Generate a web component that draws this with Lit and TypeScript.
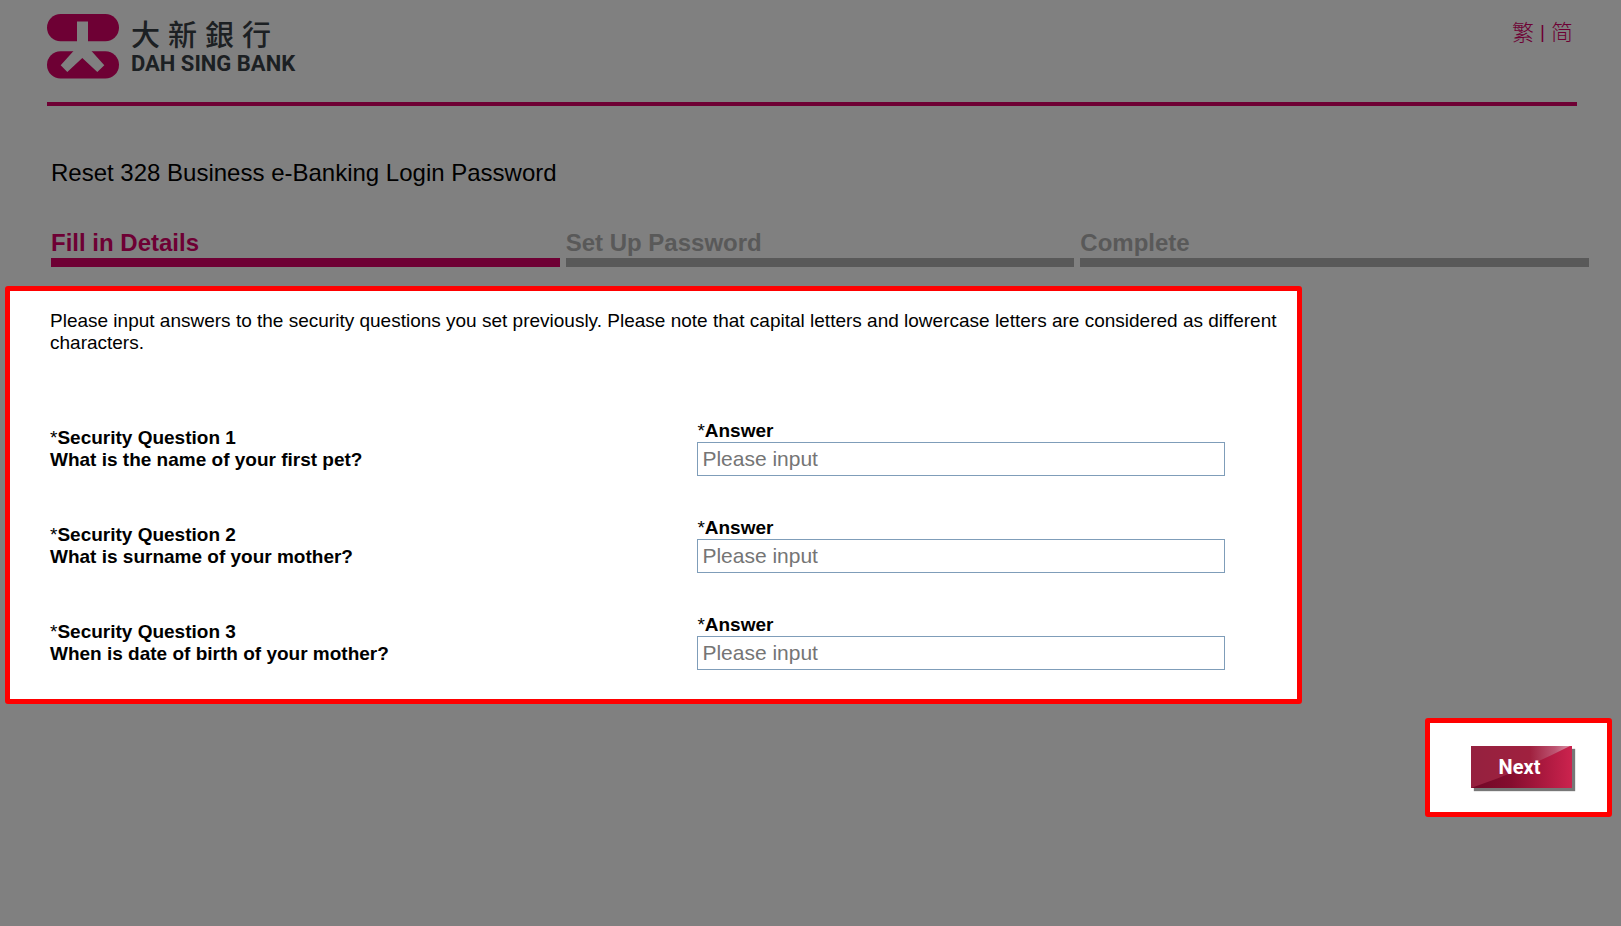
import { LitElement, html, css } from "lit";
import { customElement, state } from "lit/decorators.js";

interface SecurityQuestion {
  id: number;
  text: string;
}

@customElement("app-root")
export class AppRoot extends LitElement {
  @state() private steps = ["Fill in Details", "Set Up Password", "Complete"];
  @state() private currentStep = 0;
  @state() private questions: SecurityQuestion[] = [
    { id: 1, text: "What is the name of your first pet?" },
    { id: 2, text: "What is surname of your mother?" },
    { id: 3, text: "When is date of birth of your mother?" },
  ];

  static styles = css`
    :host {
      --brand: #6e0034;
      --muted: #595959;
      --highlight: #ff0000;
      display: block;
      box-sizing: border-box;
      min-height: 100vh;
      background: #808080;
      color: #000;
      font: 19px/22px "Liberation Sans", Arial, sans-serif;
    }
    * { box-sizing: border-box; }
    .header {
      display: flex;
      justify-content: space-between;
      align-items: flex-start;
      margin: 0 44px 0 47px;
      padding: 14px 4px 23px 0;
      border-bottom: 4px solid var(--brand);
    }
    .brand { display: flex; gap: 12px; color: #1c2023; }
    .mark { display: block; width: 72px; height: 65px; }
    .names { display: flex; flex-direction: column; padding-top: 3px; }
    .zh {
      display: flex;
      gap: 8px;
      font: 500 29px/32px "Noto Sans CJK TC", sans-serif;
    }
    .en { font: 700 22px/30px Roboto, sans-serif; }
    .langs {
      display: flex;
      gap: 6px;
      padding-top: 2px;
      color: var(--brand);
      font: 300 22px/28px "Noto Sans CJK TC", sans-serif;
    }
    .langs a { color: inherit; text-decoration: none; }
    .bar { font: 19px/32px "Liberation Sans", Arial, sans-serif; }
    .title { margin: 52px 51px 0; font-weight: 400; font-size: 24px; line-height: 30px; }
    .steps {
      display: grid;
      grid-template-columns: repeat(3, 1fr);
      gap: 6px;
      margin: 40px 32px 0 51px;
      padding: 0;
      list-style: none;
      font-weight: 700;
      font-size: 24px;
      line-height: 30px;
    }
    .step { color: var(--muted); border-bottom: 9px solid var(--muted); }
    .step.active { color: var(--brand); border-color: var(--brand); }
    .panel, .action {
      border: 5px solid var(--highlight);
      border-radius: 3px;
      background: #fff;
    }
    .panel { width: 80%; margin: 19px 0 0 5px; padding: 19px 0 29px 40px; }
    .note { margin: 0 20px 66px 0; }
    .rows { display: grid; gap: 41px; }
    .row { display: grid; grid-template-columns: 27fr 25fr; }
    .question { padding-top: 7px; font-weight: 700; }
    .question p { margin: 0; }
    .req { font-weight: 400; }
    .answer { display: flex; flex-direction: column; font-weight: 700; }
    .input {
      width: 88%;
      height: 34px;
      padding: 0 4px;
      border: 1px solid #7f9db9;
      background: #fff;
      font: 21px/26px "Liberation Sans", Arial, sans-serif;
    }
    .input::placeholder { color: #757575; opacity: 1; }
    .action { width: fit-content; margin: 14px 9px 0 auto; padding: 23px 35px 24px 41px; }
    .next {
      position: relative;
      display: block;
      width: 101px;
      height: 42px;
      padding: 0 4px 0 0;
      border: 0;
      background: none;
      box-shadow: 3px 3px 1px #777;
      color: #fff;
      font: 700 20px/42px Roboto, "Liberation Sans", sans-serif;
      cursor: pointer;
    }
    .sheen { position: absolute; inset: 0; width: 100%; height: 100%; }
    .next span { position: relative; }
  `;

  render() {
    return html`
      <header class="header">
        <div class="brand">
          <svg class="mark" viewBox="0 0 72 65" aria-hidden="true">
            <rect width="72" height="27.300" rx="13.600" fill="#6e0034" />
            <rect y="37.200" width="72" height="27.300" rx="13.600" fill="#6e0034" />
            <path d="M30 7.500h11V28q0 5.500 3.700 9.300L57.300 51.300l-7 6.700-15-14-15 14-6.600-6.700 12.600-14Q30 33.500 30 28z" fill="#808080" />
          </svg>
          <div class="names">
            <div class="zh" lang="zh-Hant">${[..."大新銀行"].map((c) => html`<span>${c}</span>`)}</div>
            <div class="en">DAH SING BANK</div>
          </div>
        </div>
        <nav class="langs">
          <a href="#hant" lang="zh-Hant">繁</a><span class="bar">|</span><a href="#hans" lang="zh-Hans">简</a>
        </nav>
      </header>
      <main>
        <h1 class="title">Reset 328 Business e-Banking Login Password</h1>
        <ol class="steps">
          ${this.steps.map(
            (s, i) => html`<li class="step ${i === this.currentStep ? "active" : ""}">${s}</li>`
          )}
        </ol>
        <form @submit=${(e: Event) => e.preventDefault()}>
          <section class="panel">
            <p class="note">
              Please input answers to the security questions you set previously. Please note that capital letters and
              lowercase letters are considered as different characters.
            </p>
            <div class="rows">
              ${this.questions.map(
                (q) => html`
                  <div class="row">
                    <div class="question" id="q${q.id}">
                      <p><span class="req">*</span>Security Question ${q.id}</p>
                      <p>${q.text}</p>
                    </div>
                    <div class="answer">
                      <label for="a${q.id}"><span class="req">*</span>Answer</label>
                      <input class="input" id="a${q.id}" type="text" placeholder="Please input" aria-describedby="q${q.id}" />
                    </div>
                  </div>
                `
              )}
            </div>
          </section>
          <div class="action">
            <button class="next" type="submit">
              <svg class="sheen" viewBox="0 0 101 42" preserveAspectRatio="none" aria-hidden="true">
                <defs>
                  <linearGradient id="base"><stop offset="0" stop-color="#6f0826" /><stop offset="0.400" stop-color="#850d2e" /><stop offset="1" stop-color="#cc234e" /></linearGradient>
                  <linearGradient id="gloss"><stop offset="0" stop-color="#95213f" /><stop offset="0.600" stop-color="#a0213f" /><stop offset="0.850" stop-color="#bd5572" /><stop offset="1" stop-color="#d990a4" /></linearGradient>
                </defs>
                <rect width="101" height="42" fill="url(#base)" />
                <path d="M0 0h99Q50 25 0 42z" fill="url(#gloss)" />
              </svg>
              <span>Next</span>
            </button>
          </div>
        </form>
      </main>
    `;
  }
}
